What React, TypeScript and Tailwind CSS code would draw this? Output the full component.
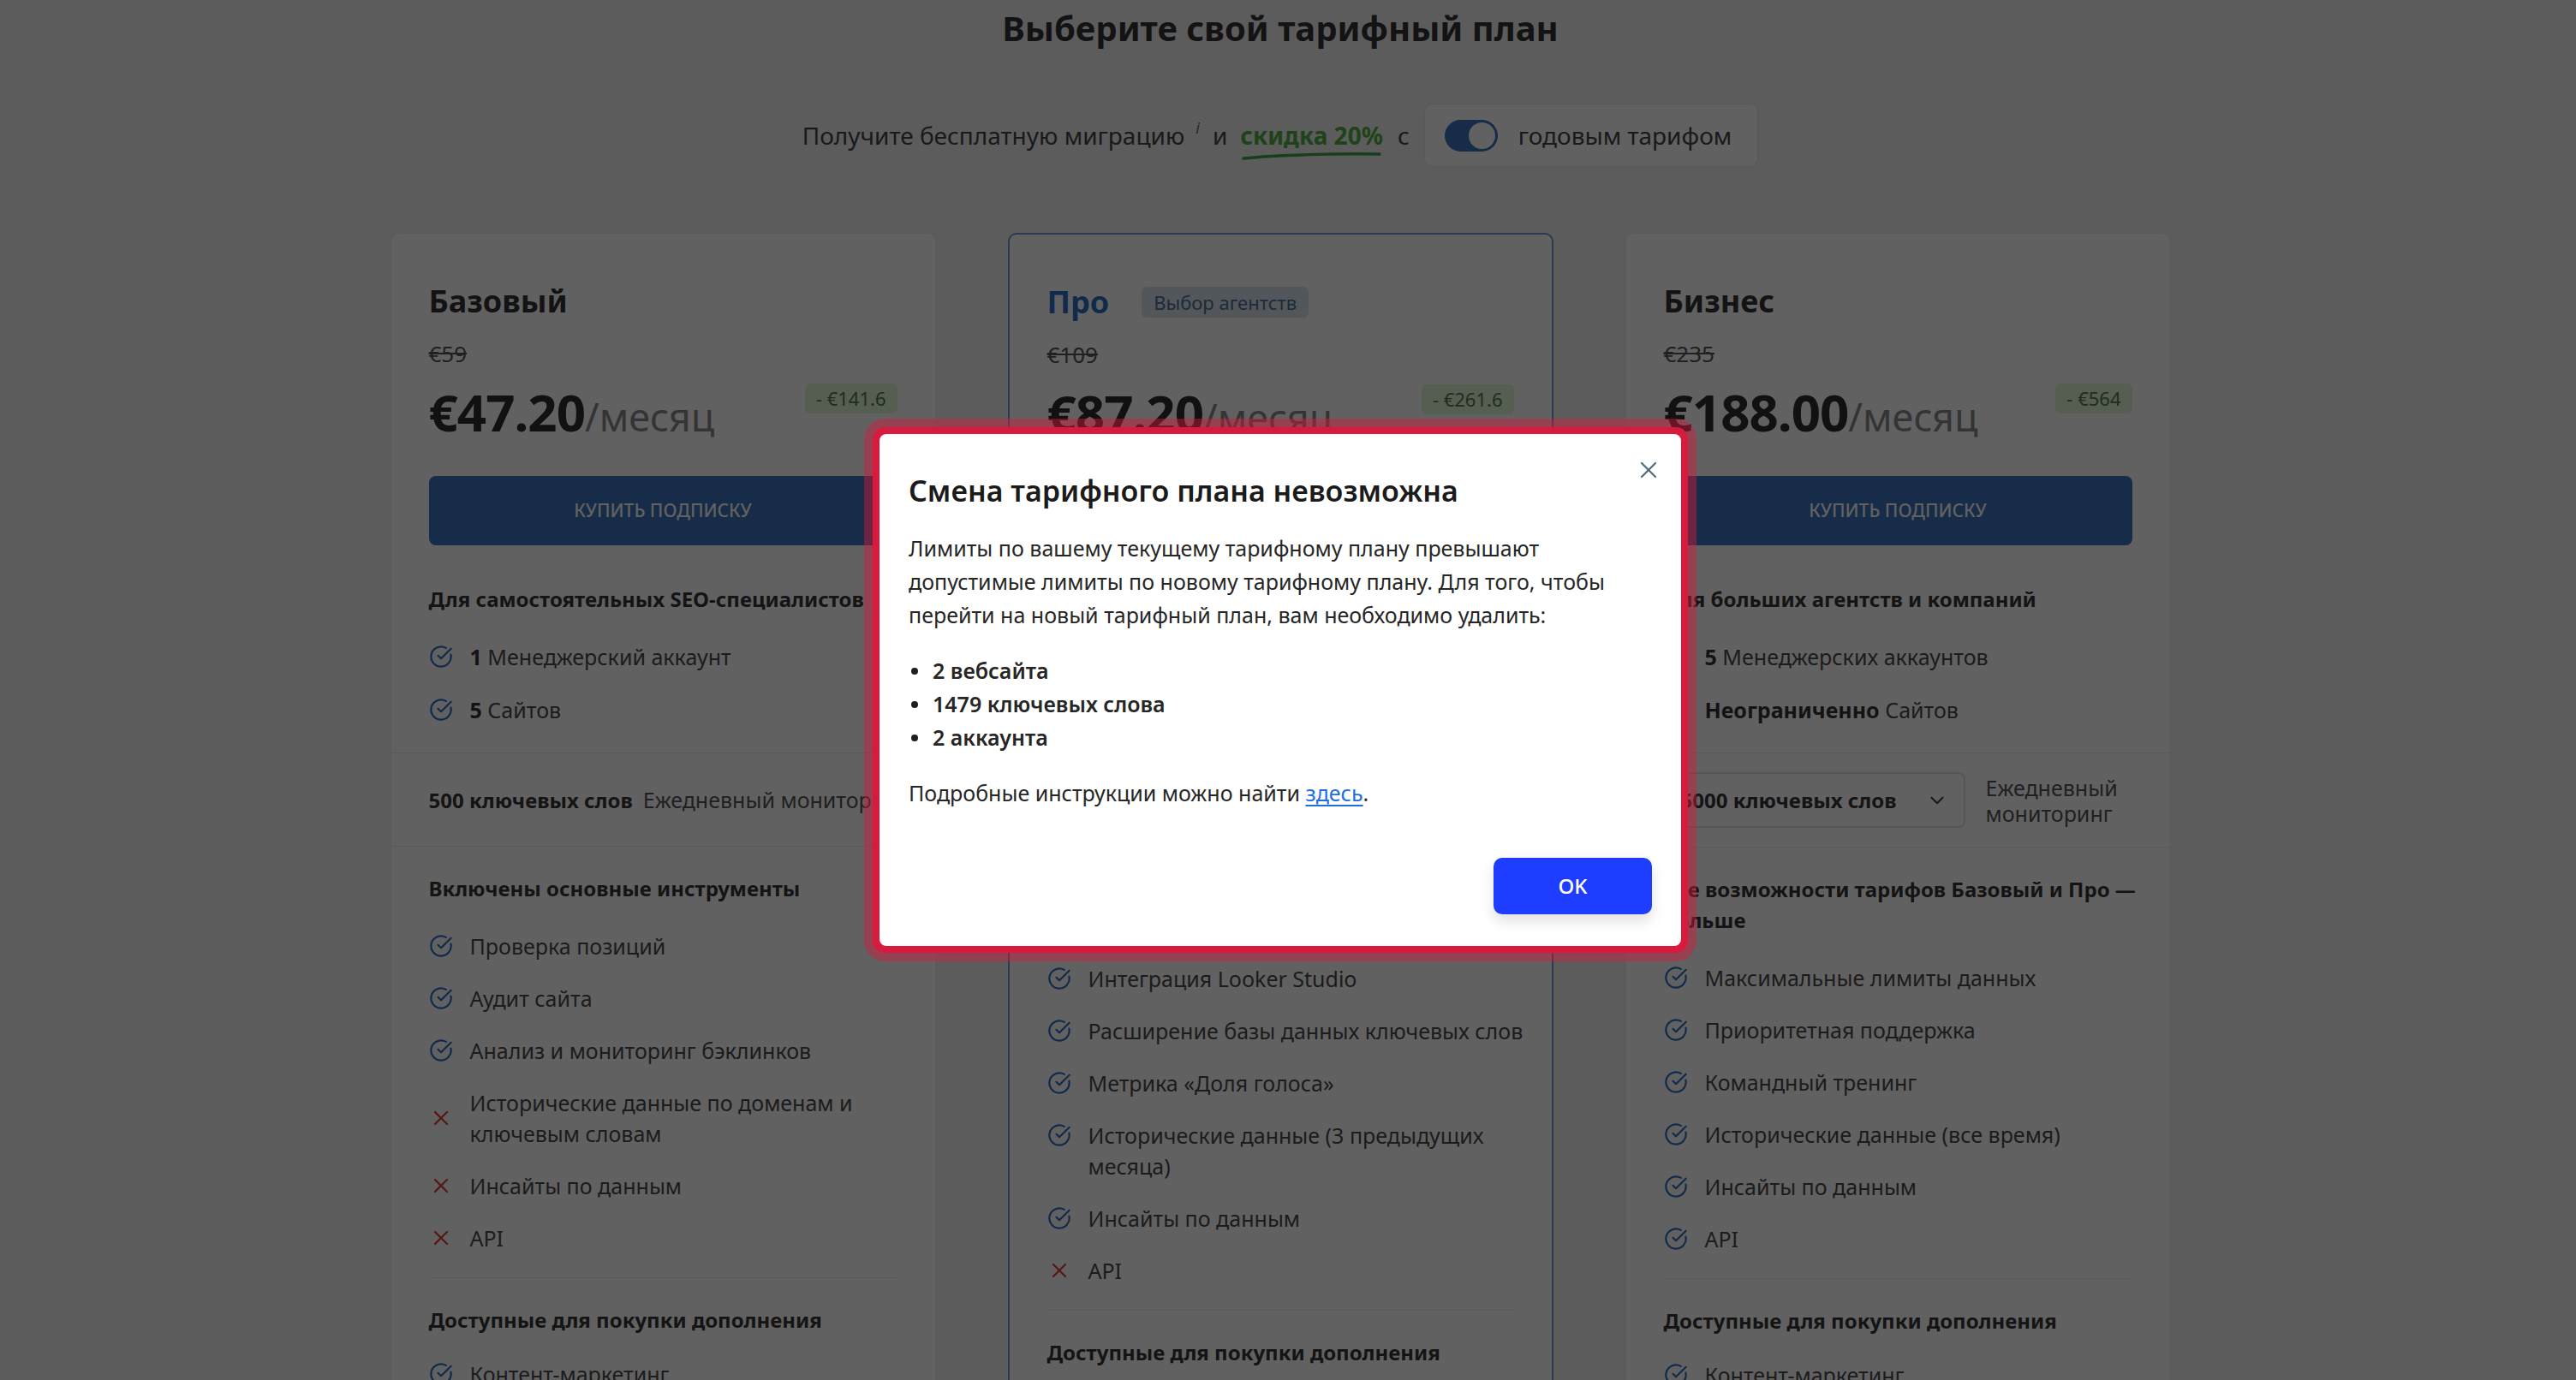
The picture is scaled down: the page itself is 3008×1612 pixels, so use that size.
import { CircleCheckBig, X, ChevronDown } from "lucide-react";

type Row = { ok: boolean; text: string; bold?: string };

type Plan = {
  name: string;
  pro?: boolean;
  oldPrice: string;
  price: string;
  saving: string;
  audience: string;
  limits: Row[];
  keywords: string;
  keywordSelect?: boolean;
  toolsTitle: string;
  tools: Row[];
  addons: Row[];
};

const plans: Plan[] = [
  {
    name: "Базовый",
    oldPrice: "€59",
    price: "€47.20",
    saving: "- €141.6",
    audience: "Для самостоятельных SEO-специалистов",
    limits: [
      { ok: true, bold: "1", text: "Менеджерский аккаунт" },
      { ok: true, bold: "5", text: "Сайтов" },
    ],
    keywords: "500 ключевых слов",
    toolsTitle: "Включены основные инструменты",
    tools: [
      { ok: true, text: "Проверка позиций" },
      { ok: true, text: "Аудит сайта" },
      { ok: true, text: "Анализ и мониторинг бэклинков" },
      { ok: false, text: "Исторические данные по доменам и\nключевым словам" },
      { ok: false, text: "Инсайты по данным" },
      { ok: false, text: "API" },
    ],
    addons: [
      { ok: true, text: "Контент-маркетинг" },
      { ok: true, text: "Локальное SEO" },
    ],
  },
  {
    name: "Про",
    pro: true,
    oldPrice: "€109",
    price: "€87.20",
    saving: "- €261.6",
    audience: "Для растущих агентств и маркетологов",
    limits: [
      { ok: true, bold: "3", text: "Менеджерских аккаунта" },
      { ok: true, bold: "15", text: "Сайтов" },
    ],
    keywords: "1500 ключевых слов",
    keywordSelect: true,
    toolsTitle: "Все возможности тарифа Базовый и\nрасширенные функции",
    tools: [
      { ok: true, text: "Интеграция Looker Studio" },
      { ok: true, text: "Расширение базы данных ключевых слов" },
      { ok: true, text: "Метрика «Доля голоса»" },
      { ok: true, text: "Исторические данные (3 предыдущих\nмесяца)" },
      { ok: true, text: "Инсайты по данным" },
      { ok: false, text: "API" },
    ],
    addons: [
      { ok: true, text: "Контент-маркетинг" },
      { ok: true, text: "Локальное SEO" },
    ],
  },
  {
    name: "Бизнес",
    oldPrice: "€235",
    price: "€188.00",
    saving: "- €564",
    audience: "Для больших агентств и компаний",
    limits: [
      { ok: true, bold: "5", text: "Менеджерских аккаунтов" },
      { ok: true, bold: "Неограниченно", text: "Сайтов" },
    ],
    keywords: "5000 ключевых слов",
    keywordSelect: true,
    toolsTitle: "Все возможности тарифов Базовый и Про —\nбольше",
    tools: [
      { ok: true, text: "Максимальные лимиты данных" },
      { ok: true, text: "Приоритетная поддержка" },
      { ok: true, text: "Командный тренинг" },
      { ok: true, text: "Исторические данные (все время)" },
      { ok: true, text: "Инсайты по данным" },
      { ok: true, text: "API" },
    ],
    addons: [
      { ok: true, text: "Контент-маркетинг" },
      { ok: true, text: "Локальное SEO" },
    ],
  },
];

function FeatureRow({ row, center }: { row: Row; center?: boolean }) {
  return (
    <li className={`flex gap-[20px] ${center ? "items-center" : "items-start"}`}>
      <span className="flex h-[36px] w-[28px] shrink-0 items-center justify-center">
        {row.ok ? (
          <CircleCheckBig size={28} strokeWidth={1.9} className="text-[#2f6fc4]" />
        ) : (
          <X size={28} strokeWidth={2} className="text-[#e0403c]" />
        )}
      </span>
      <span className="whitespace-pre text-[25px] leading-[36px] text-[#4a4a4a]">
        {row.bold && <b className="font-bold text-[#333]">{row.bold} </b>}
        {row.text}
      </span>
    </li>
  );
}

function PlanCard({ plan }: { plan: Plan }) {
  return (
    <div
      className={`w-[637px] shrink-0 rounded-[10px] bg-white ${
        plan.pro ? "border-2 border-[#6c9ad6]" : "border border-[#eeeeee]"
      }`}
    >
      <div className="px-[44px] pb-[32px] pt-[57px]">
        <div className="flex items-center gap-[38px]">
          <h2 className={`text-[36px] font-bold leading-[44px] ${plan.pro ? "text-[#2f6fc4]" : "text-[#333]"}`}>
            {plan.name}
          </h2>
          {plan.pro && (
            <span className="rounded-[6px] bg-[#d9e4f0] px-[14px] text-[22px] leading-[36px] text-[#4d6f96]">
              Выбор агентств
            </span>
          )}
        </div>
        <div className="mt-[23px] text-[26px] leading-[32px] text-[#555] line-through">{plan.oldPrice}</div>
        <div className="mt-[19px] flex items-start justify-between">
          <div className="flex items-baseline">
            <span className="text-[60px] font-bold leading-[66px] tracking-[-1px] text-[#2e2e2e]">{plan.price}</span>
            <span className="text-[45px] leading-[66px] text-[#8a8a8a]">/месяц</span>
          </div>
          <span className="rounded-[6px] bg-[#e2f3d6] px-[13px] text-[22px] leading-[35px] text-[#55784a]">
            {plan.saving}
          </span>
        </div>
        <button className="mt-[36px] flex h-[81px] w-full items-center justify-center rounded-[8px] bg-[#3a73bd] text-[21px] font-medium uppercase text-white">
          Купить подписку
        </button>
        <h3 className="mt-[45px] text-[24px] font-bold leading-[36px] text-[#363636]">{plan.audience}</h3>
        <ul className="mt-[31px] flex flex-col gap-[26px]">
          {plan.limits.map((r) => (
            <FeatureRow key={r.text + r.bold} row={r} />
          ))}
        </ul>
      </div>

      <div className="flex min-h-[109px] items-center gap-[24px] border-t border-[#ececec] px-[44px] py-[22px]">
        {plan.keywordSelect ? (
          <>
            <div className="flex h-[65px] w-[352px] shrink-0 items-center justify-between rounded-[8px] border-2 border-[#e3e3e3] px-[18px]">
              <span className="text-[24px] font-bold text-[#363636]">{plan.keywords}</span>
              <ChevronDown size={26} strokeWidth={2} className="text-[#444]" />
            </div>
            <span className="text-[25px] leading-[30px] text-[#555]">
              Ежедневный
              <br />
              мониторинг
            </span>
          </>
        ) : (
          <span className="whitespace-nowrap text-[25px] leading-[36px] text-[#555]">
            <b className="text-[24px] font-bold text-[#363636]">{plan.keywords}</b>
            <span className="ml-[12px]">Ежедневный мониторинг</span>
          </span>
        )}
      </div>

      <div className="border-t border-[#ececec] px-[44px] pt-[31px]">
        <h3 className="whitespace-pre text-[24px] font-bold leading-[36px] text-[#363636]">{plan.toolsTitle}</h3>
        <ul className="mt-[31px] flex flex-col gap-[25px]">
          {plan.tools.map((r) => (
            <FeatureRow key={r.text} row={r} center={!plan.pro} />
          ))}
        </ul>
        <div className="mt-[28px] border-t border-[#ececec]" />
        <h3 className="mt-[31px] text-[24px] font-bold leading-[36px] text-[#363636]">Доступные для покупки дополнения</h3>
        <ul className="mt-[27px] flex flex-col gap-[25px] pb-[40px]">
          {plan.addons.map((r) => (
            <FeatureRow key={r.text} row={r} />
          ))}
        </ul>
      </div>
    </div>
  );
}

function PlanChangeDialog() {
  return (
    <div className="fixed inset-0 flex items-center justify-center bg-black/[0.62] pr-[18px]">
      <div className="rounded-[14px] bg-[#d81b3d] p-[8px] shadow-[0_0_0_10px_rgba(216,27,61,0.45)]">
        <div className="relative w-[936px] rounded-[8px] bg-white px-[34px] pb-[37px] pt-[44px] text-[#262626]">
          <button className="absolute right-[22px] top-[26px] text-[#4e6c7b]">
            <X size={32} strokeWidth={1.6} />
          </button>
          <h2 className="text-[34px] font-semibold leading-[44px] text-[#1b1b1b]">Смена тарифного плана невозможна</h2>
          <p className="mt-[26px] text-[25px] leading-[39px]">
            Лимиты по вашему текущему тарифному плану превышают
            <br />
            допустимые лимиты по новому тарифному плану. Для того, чтобы
            <br />
            перейти на новый тарифный план, вам необходимо удалить:
          </p>
          <ul className="mt-[26px] text-[25px] font-semibold leading-[39px] text-[#262626]">
            {["2 вебсайта", "1479 ключевых слова", "2 аккаунта"].map((item) => (
              <li key={item} className="flex items-center gap-[17px]">
                <span className="ml-[3px] h-[8px] w-[8px] rounded-full bg-[#1f1f1f]" />
                {item}
              </li>
            ))}
          </ul>
          <p className="mt-[26px] text-[25px] leading-[39px]">
            Подробные инструкции можно найти{" "}
            <a href="#" className="text-[#1e6ee0] underline underline-offset-[4px]">
              здесь
            </a>
            .
          </p>
          <div className="mt-[56px] flex justify-end">
            <button className="h-[66px] w-[185px] rounded-[10px] bg-[#1f3dff] text-[24px] font-medium text-white shadow-[0_8px_16px_rgba(0,0,0,0.12)]">
              OK
            </button>
          </div>
        </div>
      </div>
    </div>
  );
}

export default function App() {
  return (
    <div className="relative h-[1612px] overflow-hidden bg-[#f1f2f5] font-['Noto_Sans',sans-serif]">
      <div className="pr-[18px]">
        <h1 className="pt-[9px] text-center text-[40px] font-bold leading-[48px] text-[#333]">
          Выберите свой тарифный план
        </h1>

        <div className="mt-[64px] flex items-center justify-center text-[28px] text-[#444]">
          <span>Получите бесплатную миграцию</span>
          <span className="-mt-[18px] ml-[13px] text-[18px] italic text-[#666]">i</span>
          <span className="ml-[15px]">и</span>
          <span className="relative ml-[15px] font-bold text-[#52b043]">
            скидка 20%
            <svg className="absolute -bottom-[9px] left-[2px]" width="164" height="12" viewBox="0 0 164 12" fill="none">
              <path d="M2 9 C 40 5, 110 3, 161 4" stroke="#3fa24a" strokeWidth="3.5" strokeLinecap="round" />
            </svg>
          </span>
          <span className="ml-[17px]">с</span>
          <div className="ml-[17px] flex h-[74px] items-center gap-[24px] rounded-[10px] border border-[#e8e8e8] bg-white pl-[23px] pr-[30px]">
            <span className="flex h-[37px] w-[62px] items-center justify-end rounded-full bg-[#3a73bd] p-[3px]">
              <span className="h-[31px] w-[31px] rounded-full bg-white" />
            </span>
            <span className="text-[#444]">годовым тарифом</span>
          </div>
        </div>

        <div className="mt-[77px] flex items-start justify-center gap-[84px]">
          {plans.map((p) => (
            <PlanCard key={p.name} plan={p} />
          ))}
        </div>
      </div>

      <PlanChangeDialog />
    </div>
  );
}
